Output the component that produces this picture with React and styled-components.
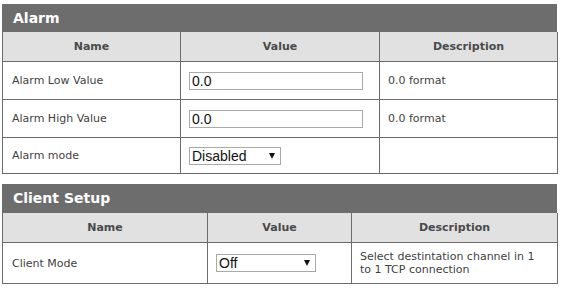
import React from 'react';
import styled, { createGlobalStyle } from 'styled-components';

const GlobalStyle = createGlobalStyle`
  body {
    margin: 0;
    background: #fff;
    font-family: "DejaVu Sans", Verdana, sans-serif;
  }
`;

const Page = styled.main`
  width: 555px;
  padding: 4px 0 0 2px;
  display: flex;
  flex-direction: column;
  gap: 10px;
`;

const Section = styled.section`
  display: flex;
  flex-direction: column;
`;

const TitleBar = styled.h2`
  margin: 0;
  height: ${(p) => p.h}px;
  line-height: ${(p) => p.h}px;
  padding-left: 11px;
  background: #6d6d6d;
  color: #fff;
  font-size: 14px;
  font-weight: bold;
`;

const Table = styled.table`
  width: 100%;
  border-collapse: collapse;
  table-layout: fixed;
  border: 1px solid #6b6b6b;
  border-top: 0;
`;

const Th = styled.th`
  height: 29px;
  padding: 0;
  background: #e1e1e1;
  color: #4a4a4a;
  font-size: 11px;
  font-weight: bold;
  text-align: center;
  border: 1px solid #6b6b6b;
  border-top: 0;
`;

const Td = styled.td`
  height: ${(p) => p.h || 37}px;
  padding: 0 16px 0 ${(p) => (p.first ? 9 : 8)}px;
  color: #3f3f3f;
  font-size: 11px;
  line-height: 13px;
  border: 1px solid #6b6b6b;
  vertical-align: middle;
`;

const TextInput = styled.input`
  box-sizing: border-box;
  display: block;
  width: 174px;
  height: 18px;
  margin: 0;
  padding: 0 2px;
  border: 1px solid #a9a9a9;
  font-family: "Liberation Sans", Arial, sans-serif;
  font-size: 14px;
  color: #111;
  outline: none;
`;

const SelectBox = styled.div`
  position: relative;
  width: ${(p) => p.w}px;
  height: 18px;
`;

const Select = styled.select`
  box-sizing: border-box;
  appearance: none;
  width: 100%;
  height: 18px;
  margin: 0;
  padding: 0 2px;
  border: 1px solid #a9a9a9;
  border-radius: 0;
  background: #fff;
  font-family: "Liberation Sans", Arial, sans-serif;
  font-size: 14px;
  color: #111;
  outline: none;
`;

const Arrow = styled.span`
  position: absolute;
  right: 6px;
  top: 6px;
  width: 0;
  height: 0;
  border-left: 3.5px solid transparent;
  border-right: 3.5px solid transparent;
  border-top: 6px solid #111;
  pointer-events: none;
`;

const Dropdown = ({ w, value, options }) => (
  <SelectBox w={w}>
    <Select defaultValue={value}>
      {options.map((o) => (
        <option key={o}>{o}</option>
      ))}
    </Select>
    <Arrow />
  </SelectBox>
);

const App = () => {
  return (
    <>
      <GlobalStyle />
      <Page>
        <Section>
          <TitleBar h={28}>Alarm</TitleBar>
          <Table>
            <colgroup>
              <col style={{ width: 178 }} />
              <col style={{ width: 199 }} />
              <col style={{ width: 178 }} />
            </colgroup>
            <thead>
              <tr>
                <Th>Name</Th>
                <Th>Value</Th>
                <Th>Description</Th>
              </tr>
            </thead>
            <tbody>
              <tr>
                <Td first>Alarm Low Value</Td>
                <Td>
                  <TextInput defaultValue='0.0' />
                </Td>
                <Td>0.0 format</Td>
              </tr>
              <tr>
                <Td first>Alarm High Value</Td>
                <Td>
                  <TextInput defaultValue='0.0' />
                </Td>
                <Td>0.0 format</Td>
              </tr>
              <tr>
                <Td first h={35}>Alarm mode</Td>
                <Td h={35}>
                  <Dropdown w={92} value='Disabled' options={['Disabled', 'Enabled']} />
                </Td>
                <Td h={35}></Td>
              </tr>
            </tbody>
          </Table>
        </Section>

        <Section>
          <TitleBar h={29}>Client Setup</TitleBar>
          <Table>
            <colgroup>
              <col style={{ width: 205 }} />
              <col style={{ width: 144 }} />
              <col style={{ width: 206 }} />
            </colgroup>
            <thead>
              <tr>
                <Th>Name</Th>
                <Th>Value</Th>
                <Th>Description</Th>
              </tr>
            </thead>
            <tbody>
              <tr>
                <Td first h={40}>Client Mode</Td>
                <Td h={40}>
                  <Dropdown w={100} value='Off' options={['Off', 'On']} />
                </Td>
                <Td h={40}>Select destintation channel in 1 to 1 TCP connection</Td>
              </tr>
            </tbody>
          </Table>
        </Section>
      </Page>
    </>
  );
};

export default App;
